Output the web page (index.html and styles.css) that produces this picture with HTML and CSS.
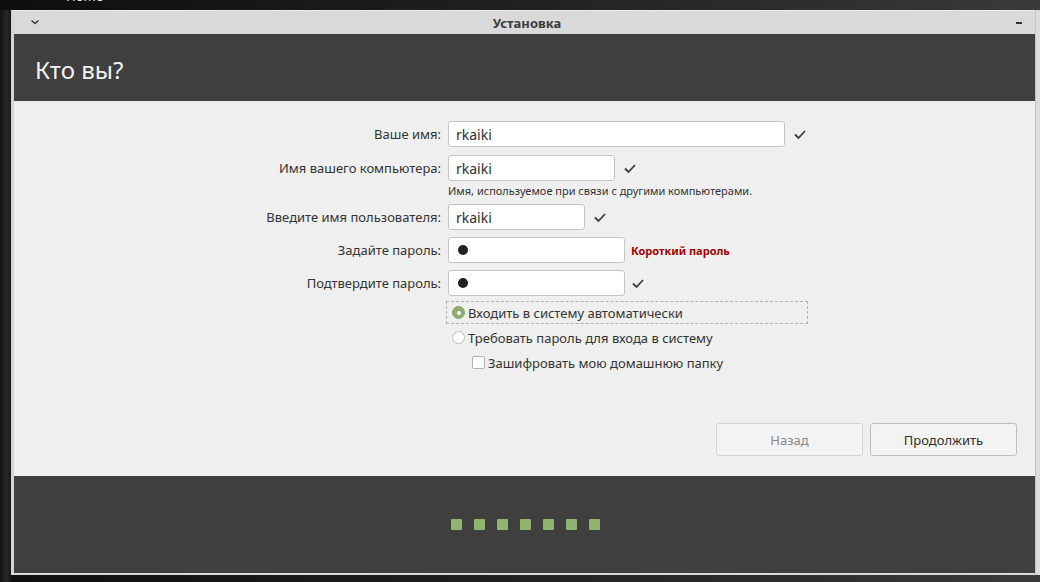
FILE: index.html
```html
<!DOCTYPE html>
<html lang="ru">
<head>
<meta charset="utf-8">
<title>Установка</title>
<link rel="stylesheet" href="styles.css">
</head>
<body>
<div class="desktop">
  <span class="desk-label">Home</span>
  <div class="side-left"></div>
  <div class="window">
    <div class="titlebar">
      <svg class="chev" width="10" height="6" viewBox="0 0 10 6"><path d="M1.5 1.5 L5 4.5 L8.5 1.5" fill="none" stroke="#3c3c3c" stroke-width="1.6"/></svg>
      <span class="title">Установка</span>
      <span class="minimize"></span>
    </div>
    <div class="header"><h1>Кто вы?</h1></div>
    <div class="content">
      <div class="form">
        <div class="row r1">
          <label class="lbl">Ваше имя:</label>
          <div class="input w1">rkaiki</div>
          <svg class="check" width="14" height="11" viewBox="0 0 14 11"><path d="M2 5.5 L5.5 9 L12 2" fill="none" stroke="#3c3c3c" stroke-width="1.8"/></svg>
        </div>
        <div class="row r2">
          <label class="lbl">Имя вашего компьютера:</label>
          <div class="input w2">rkaiki</div>
          <svg class="check" width="14" height="11" viewBox="0 0 14 11"><path d="M2 5.5 L5.5 9 L12 2" fill="none" stroke="#3c3c3c" stroke-width="1.8"/></svg>
        </div>
        <div class="hint">Имя, используемое при связи с другими компьютерами.</div>
        <div class="row r3">
          <label class="lbl">Введите имя пользователя:</label>
          <div class="input w3">rkaiki</div>
          <svg class="check" width="14" height="11" viewBox="0 0 14 11"><path d="M2 5.5 L5.5 9 L12 2" fill="none" stroke="#3c3c3c" stroke-width="1.8"/></svg>
        </div>
        <div class="row r4">
          <label class="lbl">Задайте пароль:</label>
          <div class="input w4"><span class="dot"></span></div>
          <span class="warn">Короткий пароль</span>
        </div>
        <div class="row r5">
          <label class="lbl">Подтвердите пароль:</label>
          <div class="input w4"><span class="dot"></span></div>
          <svg class="check c5" width="14" height="11" viewBox="0 0 14 11"><path d="M2 5.5 L5.5 9 L12 2" fill="none" stroke="#3c3c3c" stroke-width="1.8"/></svg>
        </div>
        <div class="options">
          <div class="opt focused"><span class="radio on"></span><span>Входить в систему автоматически</span></div>
          <div class="opt"><span class="radio"></span><span>Требовать пароль для входа в систему</span></div>
          <div class="opt sub"><span class="box"></span><span>Зашифровать мою домашнюю папку</span></div>
        </div>
      </div>
      <div class="buttons">
        <button class="btn disabled">Назад</button>
        <button class="btn">Продолжить</button>
      </div>
    </div>
    <div class="footer">
      <div class="dots">
        <span></span><span></span><span></span><span></span><span></span><span></span><span></span>
      </div>
    </div>
  </div>
  <div class="side-right"></div>
</div>
</body>
</html>
```
FILE: styles.css
```css
* { box-sizing: border-box; }
html, body { margin: 0; padding: 0; }
body {
  width: 1040px;
  height: 582px;
  overflow: hidden;
  font-family: "Noto Sans", "DejaVu Sans", sans-serif;
  background: #141414;
}
.desktop {
  position: relative;
  display: flex;
  height: 582px;
  padding-top: 10px;
  background: linear-gradient(90deg, #0e0e0e 0%, #1c1c1c 40%, #2f2f2f 80%, #3a3a3a 100%);
}
.desk-label {
  position: absolute;
  left: 66px;
  top: -10px;
  color: #f0f0f0;
  font-size: 13px;
  line-height: 13px;
}
.side-left {
  width: 11px;
  background: linear-gradient(90deg, #121212, #262626 60%, #1a1a1a);
}
.side-right {
  width: 5px;
  height: 565px;
  background: #dcdcdc;
  border-left: 1px solid #c4c4c4;
}
.window {
  width: 1024px;
  height: 565px;
  display: flex;
  flex-direction: column;
  background: #dadada;
  border-left: 3px solid #d4d4d4;
  border-top: 1px solid #ececec;
  border-bottom: 2px solid #d9d9d9;
}
.titlebar {
  height: 23px;
  flex: none;
  display: flex;
  align-items: center;
  justify-content: center;
  position: relative;
  background: #d9d9d9;
}
.chev { position: absolute; left: 16px; top: 8px; }
.title {
  font-size: 13px;
  font-weight: bold;
  color: #3c3c3c;
  padding-left: 5px;
}
.minimize {
  position: absolute;
  right: 13px;
  top: 11px;
  width: 6px;
  height: 2px;
  background: #333;
}
.header {
  height: 67px;
  flex: none;
  background: #3f3f3f;
  padding: 21px 0 0 21px;
}
.header h1 {
  margin: 0;
  font-weight: normal;
  font-size: 24px;
  line-height: 30px;
  color: #f2f2f2;
}
.content {
  height: 375px;
  flex: none;
  background: #efefef;
  padding-top: 20px;
  display: flex;
  flex-direction: column;
}
.form { display: flex; flex-direction: column; }
.row { display: flex; align-items: center; height: 26px; }
.lbl {
  width: 434px;
  padding-right: 7px;
  text-align: right;
  font-size: 13px;
  color: #333;
}
.input {
  height: 26px;
  background: #fff;
  border: 1px solid #c5c5c5;
  border-radius: 3px;
  padding-left: 7px;
  display: flex;
  align-items: center;
  font-size: 14px;
  color: #2e2e2e;
}
.w1 { width: 337px; }
.w2 { width: 167px; }
.w3 { width: 137px; }
.w4 { width: 177px; }
.check { margin-left: 8px; }
.c5 { margin-left: 6px; }
.r2 { margin-top: 8px; }
.hint {
  margin: 2px 0 0 434px;
  font-size: 11px;
  line-height: 15px;
  color: #333;
}
.r3 { margin-top: 6px; }
.r4 { margin-top: 7px; }
.r5 { margin-top: 7px; }
.dot {
  width: 10px;
  height: 10px;
  border-radius: 50%;
  background: #222;
  margin-left: 2px;
}
.warn {
  margin-left: 6px;
  font-size: 11px;
  font-weight: bold;
  color: #a10000;
}
.options {
  margin: 5px 0 0 432px;
  display: flex;
  flex-direction: column;
}
.opt {
  display: flex;
  align-items: center;
  height: 23px;
  padding-left: 5px;
  font-size: 13px;
  color: #333;
  width: 362px;
  border: 1px solid transparent;
}
.opt.focused { border: 1px dashed #b0b0b0; }
.opt + .opt { margin-top: 2px; }
.opt.sub { padding-left: 25px; margin-top: 2px; }
.radio {
  width: 13px;
  height: 13px;
  border-radius: 50%;
  background: #fff;
  border: 1px solid #bdbdbd;
  margin-right: 3px;
  flex: none;
  display: flex;
  align-items: center;
  justify-content: center;
}
.radio.on { background: #8fae6c; border-color: #86a565; }
.radio.on::after {
  content: "";
  width: 4px;
  height: 4px;
  border-radius: 50%;
  background: #fff;
}
.box {
  width: 13px;
  height: 13px;
  border-radius: 2px;
  background: #fff;
  border: 1px solid #b3b3b3;
  margin-right: 3px;
  flex: none;
}
.buttons {
  margin-top: auto;
  margin-bottom: 20px;
  display: flex;
  justify-content: flex-end;
  gap: 7px;
  padding-right: 18px;
}
.btn {
  width: 147px;
  height: 33px;
  background: #f3f3f3;
  border: 1px solid #bdbdbd;
  border-radius: 3px;
  font-family: inherit;
  font-size: 13px;
  color: #2e2e2e;
}
.btn.disabled { color: #8a8a8a; border-color: #d3d3d3; }
.footer {
  flex: 1;
  background: #3f3f3f;
  display: flex;
  align-items: center;
  justify-content: center;
}
.dots { display: flex; gap: 12px; padding-left: 2px; }
.dots span {
  width: 11px;
  height: 11px;
  background: #92b471;
  border-radius: 1px;
}
```
